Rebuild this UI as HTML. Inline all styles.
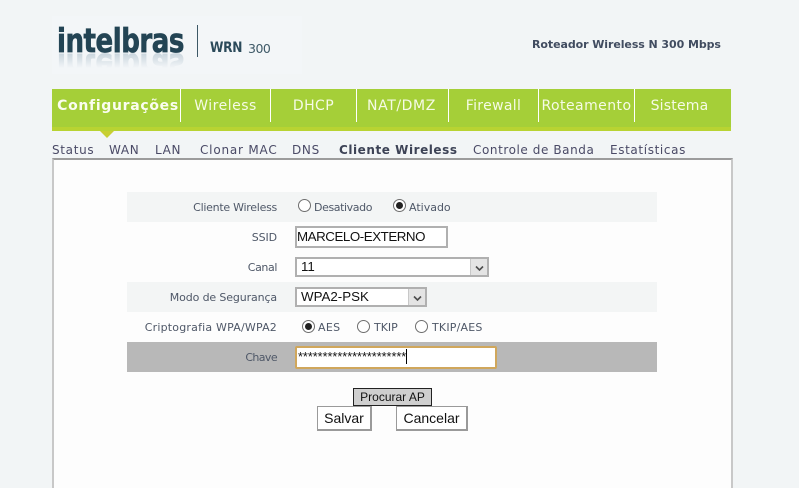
<!DOCTYPE html>
<html lang="pt">
<head>
<meta charset="utf-8">
<title>Intelbras WRN 300</title>
<style>
html,body{margin:0;padding:0}
body{width:799px;height:488px;overflow:hidden;position:relative;background:#f2f5f6;font-family:"DejaVu Sans","Liberation Sans",sans-serif;}
.a{position:absolute;white-space:nowrap}
.nav{position:absolute;top:97px;height:19px;line-height:19px;font-size:14px;color:#f6fbe6;text-align:center;letter-spacing:.6px;white-space:nowrap}
.sep{position:absolute;top:89px;width:1px;height:33px;background:#fff}
.sub{position:absolute;top:143px;font-size:12px;line-height:15px;letter-spacing:.68px;color:#4a4a66;white-space:nowrap}
.row{position:absolute;left:127px;width:530px;height:30px}
.lab{position:absolute;right:522px;font-size:11px;line-height:14px;color:#4f5868;white-space:nowrap;text-align:right}
.opt{position:absolute;font-size:11px;line-height:14px;color:#4f5868;white-space:nowrap}
.radio{position:absolute;width:11px;height:11px;border:1px solid #6e6e6e;border-radius:50%;background:#fff}
.radio.on::after{content:"";position:absolute;left:2px;top:2px;width:7px;height:7px;border-radius:50%;background:#222}
.inp{position:absolute;box-sizing:border-box;background:#fff;border:2px solid #b0b0b0;font-family:"Liberation Sans",sans-serif;font-size:13.33px;color:#111;white-space:nowrap}
.arrow{position:absolute;top:0;right:0;width:17px;height:100%;box-sizing:border-box;background:#e4e4e4;border-left:1px solid #c8c8c8}
.arrow svg{position:absolute;left:4px;top:6px}
.btn{position:absolute;box-sizing:border-box;font-family:"Liberation Sans",sans-serif;color:#111;text-align:center;white-space:nowrap}
.logo{font-family:"DejaVu Sans",sans-serif;font-weight:700;font-size:33px;line-height:38px;letter-spacing:-.6px;-webkit-text-stroke:.7px currentColor}
</style>
</head>
<body>

<!-- logo -->
<div class="a" style="left:52px;top:16px;width:250px;height:58px;background:#f3f6f8"></div>
<div class="a logo" style="left:57px;top:22px;color:#234454;transform:scaleX(.79);transform-origin:0 0">intelbras</div>
<div class="a" style="left:57px;top:53px;width:127px;height:15px;overflow:hidden">
  <div class="a logo" style="left:0;top:-31px;color:#8aa3b4;opacity:.45;transform:scale(.79,-1);transform-origin:0 31px">intelbras</div>
  <div class="a" style="left:0;top:0;width:100%;height:15px;background:linear-gradient(rgba(243,246,248,.1),#f3f6f8)"></div>
</div>
<div class="a" style="left:197px;top:25px;width:1px;height:32px;background:#3c5866"></div>
<div class="a" style="left:210px;top:39px;font-size:14px;line-height:18px;font-weight:700;color:#2b4a5a;letter-spacing:-.3px;transform:scaleX(.87);transform-origin:0 0">WRN</div>
<div class="a" style="left:248px;top:40px;font-size:12.5px;line-height:17px;color:#3f5a68;letter-spacing:-.5px">300</div>

<div class="a" style="left:532px;top:37px;font-size:11px;line-height:15px;font-weight:700;color:#414c60;letter-spacing:-.07px">Roteador Wireless N 300 Mbps</div>

<!-- nav bar -->
<div class="a" style="left:52px;top:89px;width:679px;height:38px;background:#a5cf38"></div>
<div class="a" style="left:52px;top:127px;width:679px;height:4px;background:#b8d332"></div>
<div class="a" style="left:100px;top:131px;width:0;height:0;border-left:7.5px solid transparent;border-right:7.5px solid transparent;border-top:7px solid #c8cf32"></div>

<div class="nav" style="left:54px;width:128px;font-weight:700;color:#fbfdf0;letter-spacing:.68px">Configurações</div>
<div class="sep" style="left:180px"></div>
<div class="nav" style="left:181px;width:89px;letter-spacing:.5px">Wireless</div>
<div class="sep" style="left:270px"></div>
<div class="nav" style="left:271px;width:85px;letter-spacing:.4px">DHCP</div>
<div class="sep" style="left:356px"></div>
<div class="nav" style="left:356px;width:91px">NAT/DMZ</div>
<div class="sep" style="left:448px"></div>
<div class="nav" style="left:449px;width:89px;letter-spacing:.35px">Firewall</div>
<div class="sep" style="left:538px"></div>
<div class="nav" style="left:539px;width:95px;letter-spacing:.45px">Roteamento</div>
<div class="sep" style="left:634px"></div>
<div class="nav" style="left:631px;width:97px;letter-spacing:.2px">Sistema</div>

<!-- sub nav -->
<div class="sub" style="left:52px">Status</div>
<div class="sub" style="left:109px">WAN</div>
<div class="sub" style="left:155px">LAN</div>
<div class="sub" style="left:200px;letter-spacing:.8px">Clonar MAC</div>
<div class="sub" style="left:292px">DNS</div>
<div class="sub" style="left:339px;font-weight:700;color:#3d4356;letter-spacing:.55px">Cliente Wireless</div>
<div class="sub" style="left:473px;letter-spacing:.58px">Controle de Banda</div>
<div class="sub" style="left:610px;letter-spacing:.63px">Estatísticas</div>

<!-- content box -->
<div class="a" style="left:52px;top:158px;width:681px;height:330px;box-sizing:border-box;background:#fdfdfd;border-left:2px solid #c8c8c8;border-right:2px solid #c8c8c8;border-top:2px solid #9c9c9c"></div>

<!-- rows -->
<div class="row" style="top:192px;background:#f3f5f5"></div>
<div class="row" style="top:282px;background:#f3f5f5"></div>
<div class="row" style="top:342px;background:#b8b8b8"></div>

<div class="lab" style="top:201px;letter-spacing:-.27px">Cliente Wireless</div>
<div class="radio" style="left:298px;top:199px"></div>
<div class="opt" style="left:314px;top:201px;letter-spacing:-.4px">Desativado</div>
<div class="radio on" style="left:393px;top:199px"></div>
<div class="opt" style="left:409px;top:201px">Ativado</div>

<div class="lab" style="top:231px;letter-spacing:-.1px">SSID</div>
<div class="inp" style="left:295px;top:226px;width:153px;height:22px;line-height:18px;padding-left:0;letter-spacing:-.45px">MARCELO-EXTERNO</div>

<div class="lab" style="top:261px;letter-spacing:-.4px">Canal</div>
<div class="inp" style="left:295px;top:257px;width:194px;height:20px;line-height:16px;padding-left:4px">11<span class="arrow"><svg width="9" height="7" viewBox="0 0 9 7"><path d="M1 1.5 L4.5 5 L8 1.5" fill="none" stroke="#4d4d4d" stroke-width="1.6"/></svg></span></div>

<div class="lab" style="top:291px;letter-spacing:-.13px">Modo de Segurança</div>
<div class="inp" style="left:295px;top:287px;width:132px;height:20px;line-height:16px;padding-left:4px">WPA2-PSK<span class="arrow"><svg width="9" height="7" viewBox="0 0 9 7"><path d="M1 1.5 L4.5 5 L8 1.5" fill="none" stroke="#4d4d4d" stroke-width="1.6"/></svg></span></div>

<div class="lab" style="top:321px;letter-spacing:.2px">Criptografia WPA/WPA2</div>
<div class="radio on" style="left:302px;top:320px"></div>
<div class="opt" style="left:318px;top:321px;letter-spacing:.3px">AES</div>
<div class="radio" style="left:357px;top:320px"></div>
<div class="opt" style="left:374px;top:321px">TKIP</div>
<div class="radio" style="left:415px;top:320px"></div>
<div class="opt" style="left:432px;top:321px;letter-spacing:.2px">TKIP/AES</div>

<div class="lab" style="top:351px;letter-spacing:-.6px">Chave</div>
<div class="inp" style="left:295px;top:346px;width:202px;height:23px;border:2px solid #d0a75c;border-radius:2px;line-height:19px;font-size:12.65px;padding-left:1px">**********************<span style="display:inline-block;width:1px;height:15px;background:#000;vertical-align:-3px"></span></div>

<!-- buttons -->
<div class="btn" style="left:353px;top:388px;width:79px;height:18px;background:#cfcfcf;border:1px solid #222;font-size:12px;line-height:16px">Procurar AP</div>
<div class="btn" style="left:317px;top:406px;width:55px;height:25px;background:#fff;border-style:solid;border-width:1px 2px 2px 1px;border-color:#9a9a9a;font-size:14px;line-height:22px">Salvar</div>
<div class="btn" style="left:396px;top:406px;width:72px;height:25px;background:#fff;border-style:solid;border-width:1px 2px 2px 1px;border-color:#9a9a9a;font-size:14px;line-height:22px">Cancelar</div>

</body>
</html>
